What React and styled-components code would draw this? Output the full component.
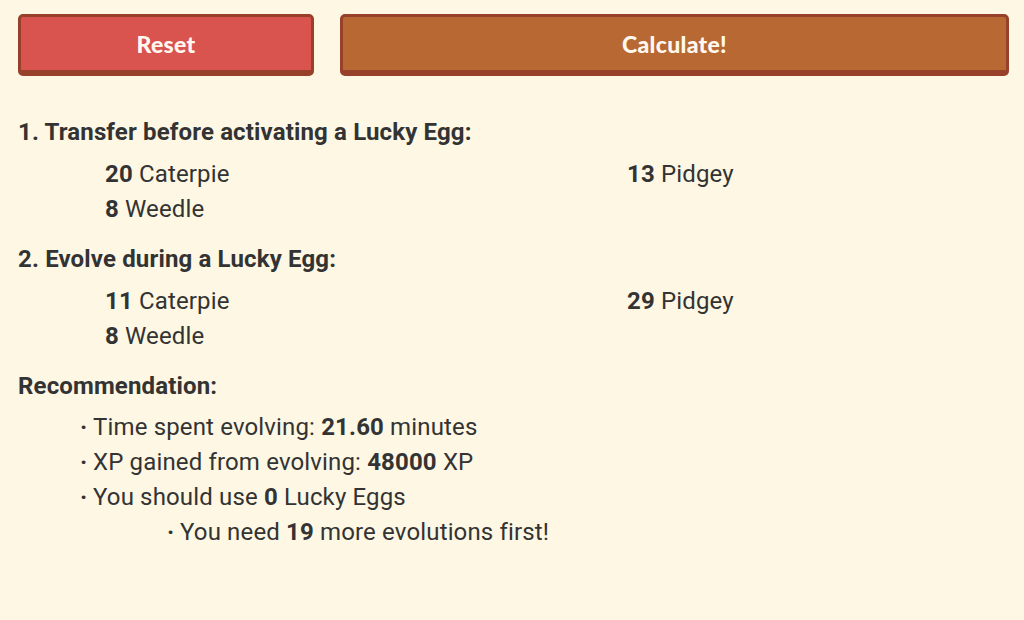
import React from 'react'
import styled, { createGlobalStyle } from 'styled-components'

const Global = createGlobalStyle`
    html, body {
        margin: 0;
        padding: 0;
        background: #fdf7e4;
    }
    body {
        font-family: Roboto, "Liberation Sans", sans-serif;
        color: #333;
        letter-spacing: 0.15px;
    }
`

const Page = styled.div`
    width: 1024px;
    height: 620px;
    box-sizing: border-box;
    padding: 14px 15px 0 18px;
    background: #fdf7e4;
`

const Toolbar = styled.div`
    display: flex;
    gap: 26px;
    margin-bottom: 39px;
`

const Button = styled.button`
    flex: ${(p) => (p.width ? `0 0 ${p.width}px` : '1')};
    height: 62px;
    box-sizing: border-box;
    border: 3px solid #97412a;
    border-bottom-width: 6px;
    border-radius: 5px;
    background: ${(p) => p.bg};
    color: #fff8f0;
    font-family: Lato, "Open Sans", sans-serif;
    font-weight: 900;
    font-size: 23px;
    letter-spacing: 0.3px;
    cursor: pointer;
    padding: 0;
`

const Heading = styled.h2`
    margin: 0;
    font-size: 24px;
    font-weight: 700;
    line-height: 35px;
`

const Grid = styled.div`
    display: grid;
    grid-template-columns: 522px 1fr;
    padding-left: 87px;
    margin: 7px 0 15px;
    font-size: 24px;
    line-height: 35px;

    & b {
        font-weight: 700;
    }
`

const Bullets = styled.ul`
    list-style: none;
    margin: 6px 0 0;
    padding: 0 0 0 ${(p) => p.indent}px;
    font-size: 24px;
    line-height: 35px;
`

const Bullet = styled.li`
    padding-left: ${(p) => p.sub || 0}px;

    &::before {
        content: '·';
        display: inline-block;
        width: 13px;
        font-weight: 700;
    }
`

const Pokemon = ({ n, name }) => (
    <div>
        <b>{n}</b> {name}
    </div>
)

const App = () => {
    return (
        <Page>
            <Global />
            <Toolbar>
                <Button width={296} bg="#d9534f">Reset</Button>
                <Button bg="#b86832">Calculate!</Button>
            </Toolbar>

            <Heading>1. Transfer before activating a Lucky Egg:</Heading>
            <Grid>
                <Pokemon n="20" name="Caterpie" />
                <Pokemon n="13" name="Pidgey" />
                <Pokemon n="8" name="Weedle" />
            </Grid>

            <Heading>2. Evolve during a Lucky Egg:</Heading>
            <Grid>
                <Pokemon n="11" name="Caterpie" />
                <Pokemon n="29" name="Pidgey" />
                <Pokemon n="8" name="Weedle" />
            </Grid>

            <Heading>Recommendation:</Heading>
            <Bullets indent={62}>
                <Bullet>Time spent evolving: <b>21.60</b> minutes</Bullet>
                <Bullet>XP gained from evolving: <b>48000</b> XP</Bullet>
                <Bullet>You should use <b>0</b> Lucky Eggs</Bullet>
                <Bullet sub={87}>You need <b>19</b> more evolutions first!</Bullet>
            </Bullets>
        </Page>
    )
}

export default App
